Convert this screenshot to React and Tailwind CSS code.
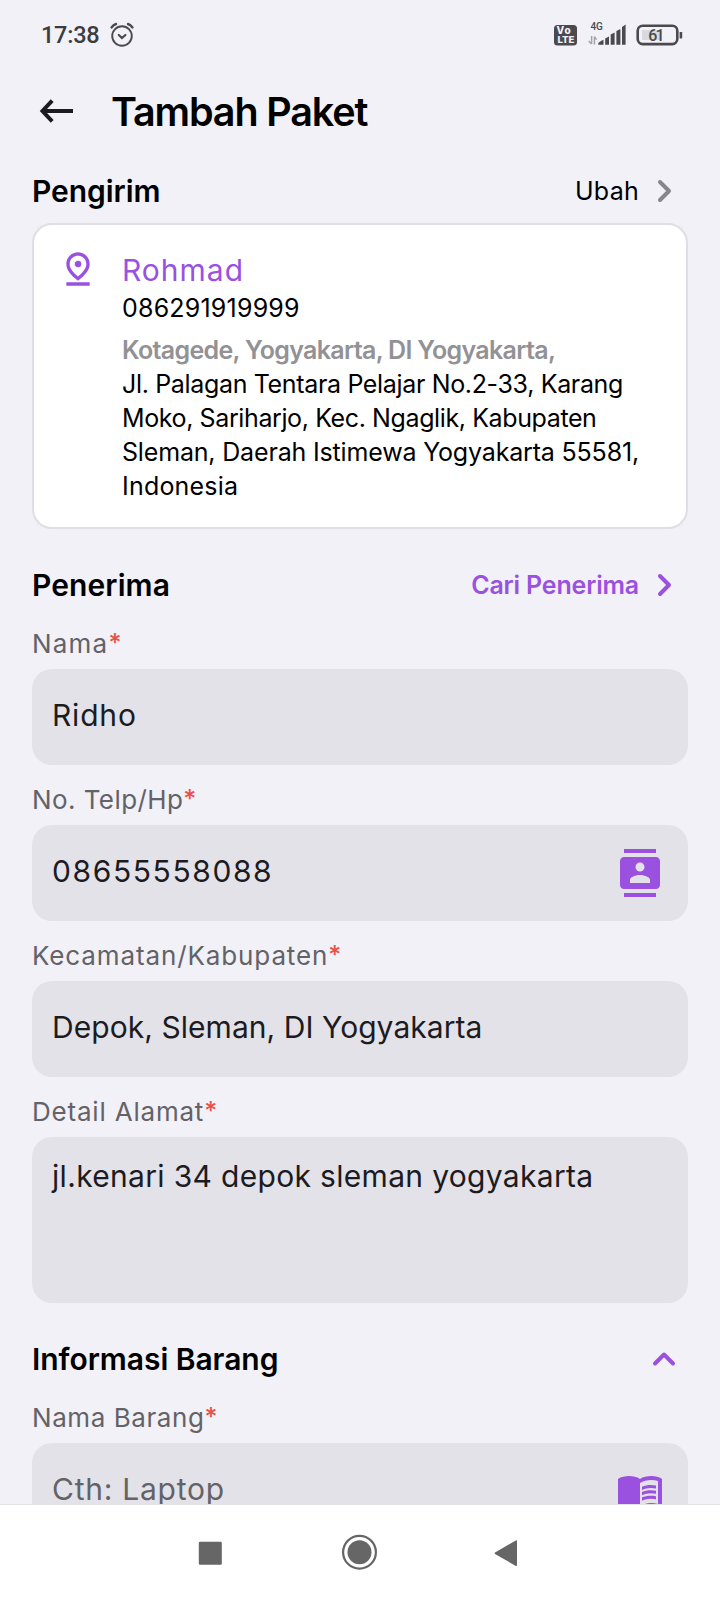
import React from "react";
import { MdOutlinePinDrop, MdContacts, MdMenuBook } from "react-icons/md";

function StatusBar() {
  return (
    <div className="flex h-[70px] shrink-0 items-center justify-between pl-[41px] pr-[36px] text-[#4a4a4e]">
      <div className="flex items-center gap-[10px]">
        <span className="font-[Roboto] text-[23.5px] leading-7 font-medium tracking-[-0.25px] text-[#3c3c40]">17:38</span>
        <svg width="26" height="26" viewBox="0 0 26 26" fill="none" stroke="currentColor" strokeWidth="1.9" strokeLinecap="round">
          <circle cx="13" cy="14" r="9.8" />
          <path d="M2.5 5.4Q4.5 2.8 7 2" strokeWidth="2.4" />
          <path d="M19 2Q21.5 2.8 23.5 5.4" strokeWidth="2.4" />
          <path d="M9.8 13L13 16L16.4 13" strokeWidth="2.2" />
        </svg>
      </div>
      <svg width="130" height="26" viewBox="0 0 130 26" fill="currentColor">
        <rect x="0" y="3" width="23" height="20.4" rx="3.5" />
        <text x="2.6" y="12.2" fontFamily="Inter, sans-serif" fontSize="10" fontWeight="800" fill="#f2f1f7" textLength="14">Vo</text>
        <text x="3.4" y="21.4" fontFamily="Inter, sans-serif" fontSize="9.5" fontWeight="800" fill="#f2f1f7" textLength="17" lengthAdjust="spacingAndGlyphs">LTE</text>
        <text x="36.4" y="8" fontFamily="Roboto, sans-serif" fontSize="10" fontWeight="500" textLength="12.5">4G</text>
        <g stroke="#a4a4a9" strokeWidth="1.5" fill="none">
          <path d="M37.6 14V22M34.8 19L37.4 22" />
          <path d="M40.4 22.4V14.5M40.4 14.8L42.6 17.6" />
        </g>
        <path d="M44.3 22.7V21Q47 18.6 49.5 17.8V22.7Z" />
        <path d="M51.2 22.7V16.4L55 14.4V22.7Z" />
        <path d="M56.7 22.7V12.4L60.6 10.4V22.7Z" />
        <path d="M62.4 22.7V9L66.4 6.9V22.7Z" />
        <path d="M68 22.7V5L71.6 2.6V22.7Z" />
        <rect x="83.7" y="3.7" width="39.6" height="18.4" rx="5" fill="none" stroke="currentColor" strokeWidth="2.6" />
        <rect x="88" y="8" width="19.5" height="10" fill="#dadade" />
        <rect x="125.6" y="10" width="2.6" height="6.4" rx="0.6" />
        <text x="94.2" y="18.6" fontFamily="Roboto, sans-serif" fontSize="16" fontWeight="500" textLength="16.5">61</text>
      </svg>
    </div>
  );
}

function Chevron({ up }) {
  return (
    <svg width="28" height="28" viewBox="0 0 28 28" fill="none" stroke="currentColor" strokeWidth="4" strokeLinecap="round" strokeLinejoin="round">
      <path d={up ? "M5 18.5L14 9.5L23 18.5" : "M10 5L19 14L10 23"} />
    </svg>
  );
}

function SectionRow({ title, tracking, children }) {
  return (
    <div className="flex h-12 shrink-0 items-center justify-between pl-8 pr-[42px]">
      <h2 className={`text-[30px] leading-10 font-semibold text-black ${tracking}`}>{title}</h2>
      <div className="flex items-center gap-[11px]">{children}</div>
    </div>
  );
}

function Label({ children, tracking }) {
  return (
    <div className="mt-[18px] flex h-[33px] shrink-0 items-center pl-8 text-[26px] leading-[33px] text-[#636267]">
      <span className={tracking}>{children}</span>
      <span className="text-[25px] leading-[33px] font-medium text-[#eb4f48]">*</span>
    </div>
  );
}

function Field({ value, tracking, muted, icon }) {
  return (
    <div className="mx-8 mt-[9px] flex h-24 shrink-0 items-center justify-between rounded-[20px] bg-[#e3e2e8] pr-6 pl-5">
      <span className={`pb-[5px] text-[30px] leading-10 ${muted ? "text-[#636267]" : "text-[#1c1b1f]"} ${tracking}`}>{value}</span>
      {icon}
    </div>
  );
}

export default function App() {
  return (
    <div className="flex h-[1600px] w-[720px] flex-col overflow-hidden bg-[#f2f1f7] font-[Inter,sans-serif]">
      <StatusBar />
      <header className="flex h-[82px] shrink-0 items-center pl-[38px]">
        <svg width="38" height="28" viewBox="0 0 38 28" fill="none" stroke="#1c1b1f" strokeWidth="4">
          <path d="M4.5 14H35" />
          <path d="M14.2 3.6L4.5 14L14.2 24.4" />
        </svg>
        <h1 className="ml-[35px] pt-px text-[39.5px] leading-[48px] font-semibold tracking-[-1.15px] text-black">Tambah Paket</h1>
      </header>

      <main className="flex min-h-0 flex-1 flex-col overflow-hidden pt-[15px]">
        <SectionRow title="Pengirim" tracking="tracking-[-0.05px]">
          <span className="text-[25px] leading-8 tracking-[0.27px] text-black">Ubah</span>
          <span className="text-[#87868b]"><Chevron /></span>
        </SectionRow>

        <section className="mx-8 mt-2 flex h-[306px] shrink-0 rounded-[20px] border-2 border-[#dfdee4] bg-white pt-[25px] pl-[24px]">
          <MdOutlinePinDrop className="-mt-px size-10 shrink-0 text-[#9b51e0]" />
          <div className="ml-6 flex flex-col text-[25px] leading-[34px] whitespace-nowrap text-black">
            <span className="text-[30px] leading-10 tracking-[1px] text-[#9b51e0]">Rohmad</span>
            <span className="mt-px tracking-[0.2px]">086291919999</span>
            <span className="mt-2 font-semibold tracking-[-0.67px] text-[#929195]">Kotagede, Yogyakarta, DI Yogyakarta,</span>
            <span className="tracking-[-0.34px]">Jl. Palagan Tentara Pelajar No.2-33, Karang</span>
            <span className="tracking-[-0.39px]">Moko, Sariharjo, Kec. Ngaglik, Kabupaten</span>
            <span className="tracking-[-0.17px]">Sleman, Daerah Istimewa Yogyakarta 55581,</span>
            <span className="tracking-[0.2px]">Indonesia</span>
          </div>
        </section>

        <div className="h-8 shrink-0" />
        <SectionRow title="Penerima" tracking="tracking-[0.1px]">
          <span className="text-[25px] leading-8 font-semibold tracking-[-0.18px] text-[#9b51e0]">Cari Penerima</span>
          <span className="text-[#9b51e0]"><Chevron /></span>
        </SectionRow>

        <Label tracking="tracking-[1.2px]">Nama</Label>
        <Field value="Ridho" tracking="tracking-[0.8px]" />
        <Label tracking="tracking-[0.42px]">No. Telp/Hp</Label>
        <Field value="08655558088" tracking="tracking-[1.6px]" icon={<MdContacts className="size-12 text-[#9b51e0]" />} />
        <Label tracking="tracking-[0.88px]">Kecamatan/Kabupaten</Label>
        <Field value="Depok, Sleman, DI Yogyakarta" tracking="tracking-[0.05px]" />
        <Label tracking="tracking-[0.8px]">Detail Alamat</Label>
        <div className="mx-8 mt-[9px] h-[166px] shrink-0 rounded-[20px] bg-[#e3e2e8] pt-[19px] pl-5 text-[30px] leading-10 tracking-[0.32px] text-[#1c1b1f]">
          jl.kenari 34 depok sleman yogyakarta
        </div>

        <div className="h-8 shrink-0" />
        <SectionRow title="Informasi Barang" tracking="tracking-[-0.05px]">
          <span className="text-[#9b51e0]"><Chevron up /></span>
        </SectionRow>
        <Label tracking="tracking-[0.57px]">Nama Barang</Label>
        <Field value="Cth: Laptop" tracking="tracking-[0.75px]" muted icon={<MdMenuBook className="size-12 text-[#9b51e0]" />} />
      </main>

      <nav className="flex h-24 shrink-0 items-center border-t border-[#e3e2e6] bg-white pl-[198px] text-[#666666]">
        <svg width="24" height="24" viewBox="0 0 24 24" fill="currentColor"><rect x="0.8" y="0.8" width="23" height="23" rx="1.2" /></svg>
        <svg className="ml-[119px]" width="37" height="37" viewBox="0 0 37 37" fill="none">
          <circle cx="18.5" cy="18.2" r="16.4" stroke="currentColor" strokeWidth="2.2" />
          <circle cx="18.5" cy="18.2" r="12" fill="currentColor" />
        </svg>
        <svg className="ml-[115px]" width="26" height="28" viewBox="0 0 26 28" fill="currentColor" stroke="currentColor" strokeWidth="1.6" strokeLinejoin="round">
          <path d="M2.4 14.2L23.2 2.2V26.2Z" />
        </svg>
      </nav>
    </div>
  );
}
